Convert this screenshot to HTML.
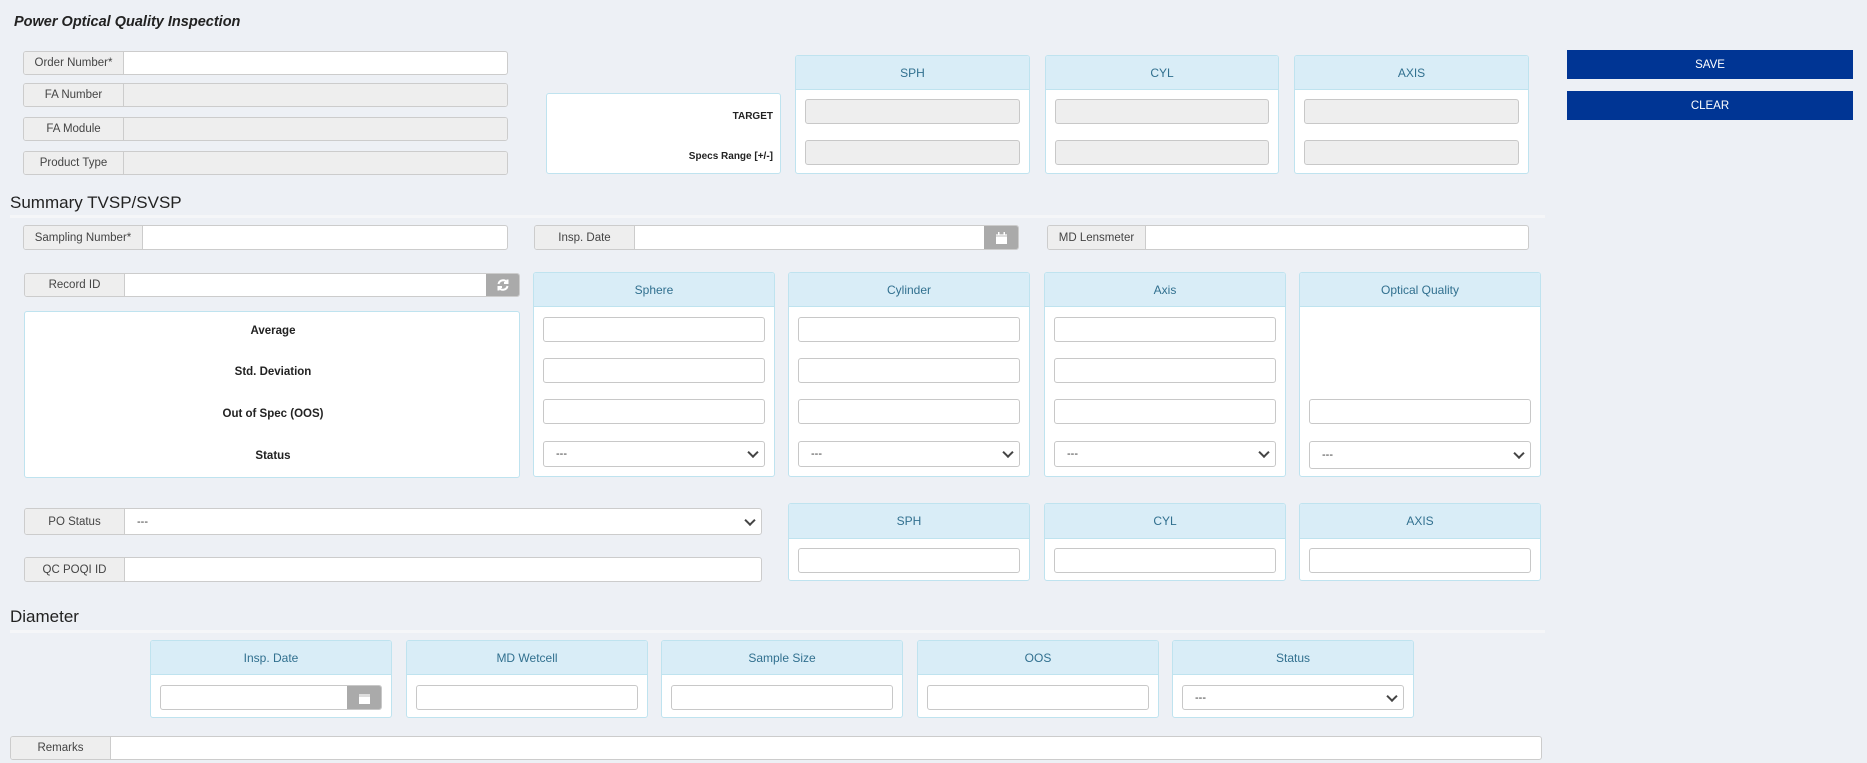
<!DOCTYPE html>
<html><head><meta charset="utf-8"><style>
*{box-sizing:border-box;margin:0;padding:0}
body{width:1867px;height:763px;background:#edf0f5;font-family:"Liberation Sans",sans-serif;font-size:12px;color:#333;position:relative;overflow:hidden}
.a{position:absolute}
.grp{position:absolute;display:flex;border:1px solid #ccc;border-radius:3px;background:#fff;overflow:hidden}
.grp .l{background:#eee;border-right:1px solid #ccc;display:flex;align-items:center;justify-content:center;color:#444;font-size:11.5px;flex:none}
.grp .f{flex:1;position:relative}
.grp .f.d{background:#eee}
.card{position:absolute;background:#fff;border:1px solid #bfe3ef;border-radius:3px;overflow:hidden}
.card .h{background:#d9edf7;border-bottom:1px solid #bfe3ef;color:#31708f;display:flex;align-items:center;justify-content:center;font-size:12px}
.in{position:absolute;border:1px solid #c8c8c8;border-radius:3px;background:#fff}
.in.d{background:#eee}
.sel::after{content:"";position:absolute;right:7px;top:50%;width:6px;height:6px;border-right:2px solid #444;border-bottom:2px solid #444;transform:translateY(-70%) rotate(45deg)}
.sel span{position:absolute;left:12px;top:50%;transform:translateY(-50%);font-size:11px}
.btn{position:absolute;background:#003594;color:#fff;display:flex;align-items:center;justify-content:center;font-size:11.5px}
.ib{position:absolute;background:#aaa;display:flex;align-items:center;justify-content:center}
.lbl{position:absolute;font-weight:bold;font-size:11.5px;color:#222}
.hr{position:absolute;height:3px;background:#f5f6f8}
</style></head><body>
<div class="a" style="left:14px;top:14px;font-weight:bold;font-style:italic;font-size:14.5px;color:#222">Power Optical Quality Inspection</div>

<div class="grp" style="left:23px;top:51px;width:485px;height:24px"><div class="l" style="width:100px">Order Number*</div><div class="f"></div></div>
<div class="grp" style="left:23px;top:83px;width:485px;height:24px"><div class="l" style="width:100px">FA Number</div><div class="f d"></div></div>
<div class="grp" style="left:23px;top:117px;width:485px;height:24px"><div class="l" style="width:100px">FA Module</div><div class="f d"></div></div>
<div class="grp" style="left:23px;top:151px;width:485px;height:24px"><div class="l" style="width:100px">Product Type</div><div class="f d"></div></div>

<div class="card" style="left:546px;top:93px;width:235px;height:81px">
<div class="lbl" style="right:7px;top:17px;font-size:10px">TARGET</div>
<div class="lbl" style="right:7px;top:57px;font-size:10px">Specs Range [+/-]</div></div>

<div class="card" style="left:795px;top:55px;width:235px;height:119px"><div class="h" style="height:34px">SPH</div><div class="in d" style="left:9px;top:43px;right:9px;height:25px"></div><div class="in d" style="left:9px;top:84px;right:9px;height:25px"></div></div>
<div class="card" style="left:1045px;top:55px;width:234px;height:119px"><div class="h" style="height:34px">CYL</div><div class="in d" style="left:9px;top:43px;right:9px;height:25px"></div><div class="in d" style="left:9px;top:84px;right:9px;height:25px"></div></div>
<div class="card" style="left:1294px;top:55px;width:235px;height:119px"><div class="h" style="height:34px">AXIS</div><div class="in d" style="left:9px;top:43px;right:9px;height:25px"></div><div class="in d" style="left:9px;top:84px;right:9px;height:25px"></div></div>

<div class="btn" style="left:1567px;top:50px;width:286px;height:29px">SAVE</div>
<div class="btn" style="left:1567px;top:91px;width:286px;height:29px">CLEAR</div>

<div class="a" style="left:10px;top:193px;font-size:17px;color:#222">Summary TVSP/SVSP</div>
<div class="hr" style="left:10px;top:215px;width:1535px"></div>

<div class="grp" style="left:23px;top:225px;width:485px;height:25px"><div class="l" style="width:119px">Sampling Number*</div><div class="f"></div></div>
<div class="grp" style="left:534px;top:225px;width:485px;height:25px"><div class="l" style="width:100px">Insp. Date</div><div class="f"></div><div class="ib" style="position:relative;width:34px"><svg width="11" height="12" viewBox="0 0 11 12"><rect x="0" y="2" width="11" height="10" fill="#fff"/><rect x="0" y="2" width="11" height="3" fill="#ddd"/><rect x="2" y="0" width="1.5" height="3" fill="#fff"/><rect x="7.5" y="0" width="1.5" height="3" fill="#fff"/></svg></div></div>
<div class="grp" style="left:1047px;top:225px;width:482px;height:25px"><div class="l" style="width:98px">MD Lensmeter</div><div class="f"></div></div>

<div class="grp" style="left:24px;top:273px;width:496px;height:24px"><div class="l" style="width:100px">Record ID</div><div class="f"></div><div class="ib" style="position:relative;width:33px"><svg width="14" height="14" viewBox="0 0 14 14" fill="none" stroke="#fff" stroke-width="2"><path d="M2.5 6a4.6 4.6 0 0 1 8.4-1.6"/><path d="M11.5 8a4.6 4.6 0 0 1-8.4 1.6"/><path d="M11.5 1.5v3.5H8" /><path d="M2.5 12.5V9H6"/></svg></div></div>

<div class="card" style="left:24px;top:311px;width:496px;height:167px">
<div class="lbl" style="left:0;width:496px;text-align:center;top:13px">Average</div>
<div class="lbl" style="left:0;width:496px;text-align:center;top:54px">Std. Deviation</div>
<div class="lbl" style="left:0;width:496px;text-align:center;top:96px">Out of Spec (OOS)</div>
<div class="lbl" style="left:0;width:496px;text-align:center;top:138px">Status</div>
</div>

<div class="card" style="left:533px;top:272px;width:242px;height:205px"><div class="h" style="height:34px">Sphere</div>
<div class="in" style="left:9px;top:44px;right:9px;height:25px"></div><div class="in" style="left:9px;top:85px;right:9px;height:25px"></div><div class="in" style="left:9px;top:126px;right:9px;height:25px"></div><div class="in sel" style="left:9px;top:168px;right:9px;height:26px"><span>---</span></div></div>
<div class="card" style="left:788px;top:272px;width:242px;height:205px"><div class="h" style="height:34px">Cylinder</div>
<div class="in" style="left:9px;top:44px;right:9px;height:25px"></div><div class="in" style="left:9px;top:85px;right:9px;height:25px"></div><div class="in" style="left:9px;top:126px;right:9px;height:25px"></div><div class="in sel" style="left:9px;top:168px;right:9px;height:26px"><span>---</span></div></div>
<div class="card" style="left:1044px;top:272px;width:242px;height:205px"><div class="h" style="height:34px">Axis</div>
<div class="in" style="left:9px;top:44px;right:9px;height:25px"></div><div class="in" style="left:9px;top:85px;right:9px;height:25px"></div><div class="in" style="left:9px;top:126px;right:9px;height:25px"></div><div class="in sel" style="left:9px;top:168px;right:9px;height:26px"><span>---</span></div></div>
<div class="card" style="left:1299px;top:272px;width:242px;height:205px"><div class="h" style="height:34px">Optical Quality</div>
<div class="in" style="left:9px;top:126px;right:9px;height:25px"></div><div class="in sel" style="left:9px;top:168px;right:9px;height:28px"><span>---</span></div></div>

<div class="grp" style="left:24px;top:508px;width:738px;height:27px"><div class="l" style="width:100px">PO Status</div><div class="f sel"><span>---</span></div></div>
<div class="grp" style="left:24px;top:557px;width:738px;height:25px"><div class="l" style="width:100px">QC POQI ID</div><div class="f"></div></div>

<div class="card" style="left:788px;top:503px;width:242px;height:78px"><div class="h" style="height:35px">SPH</div><div class="in" style="left:9px;top:44px;right:9px;height:25px"></div></div>
<div class="card" style="left:1044px;top:503px;width:242px;height:78px"><div class="h" style="height:35px">CYL</div><div class="in" style="left:9px;top:44px;right:9px;height:25px"></div></div>
<div class="card" style="left:1299px;top:503px;width:242px;height:78px"><div class="h" style="height:35px">AXIS</div><div class="in" style="left:9px;top:44px;right:9px;height:25px"></div></div>

<div class="a" style="left:10px;top:607px;font-size:17px;color:#222">Diameter</div>
<div class="hr" style="left:10px;top:630px;width:1535px"></div>

<div class="card" style="left:150px;top:640px;width:242px;height:78px"><div class="h" style="height:34px">Insp. Date</div><div class="in" style="left:9px;top:44px;right:9px;height:25px;overflow:hidden"><div class="ib" style="right:0;top:0;bottom:0;width:34px"><svg width="11" height="12" viewBox="0 0 11 12"><rect x="0" y="2" width="11" height="10" fill="#fff"/><rect x="0" y="2" width="11" height="3" fill="#ddd"/></svg></div></div></div>
<div class="card" style="left:406px;top:640px;width:242px;height:78px"><div class="h" style="height:34px">MD Wetcell</div><div class="in" style="left:9px;top:44px;right:9px;height:25px"></div></div>
<div class="card" style="left:661px;top:640px;width:242px;height:78px"><div class="h" style="height:34px">Sample Size</div><div class="in" style="left:9px;top:44px;right:9px;height:25px"></div></div>
<div class="card" style="left:917px;top:640px;width:242px;height:78px"><div class="h" style="height:34px">OOS</div><div class="in" style="left:9px;top:44px;right:9px;height:25px"></div></div>
<div class="card" style="left:1172px;top:640px;width:242px;height:78px"><div class="h" style="height:34px">Status</div><div class="in sel" style="left:9px;top:44px;right:9px;height:25px"><span>---</span></div></div>

<div class="grp" style="left:10px;top:736px;width:1532px;height:24px"><div class="l" style="width:100px">Remarks</div><div class="f"></div></div>
</body></html>
